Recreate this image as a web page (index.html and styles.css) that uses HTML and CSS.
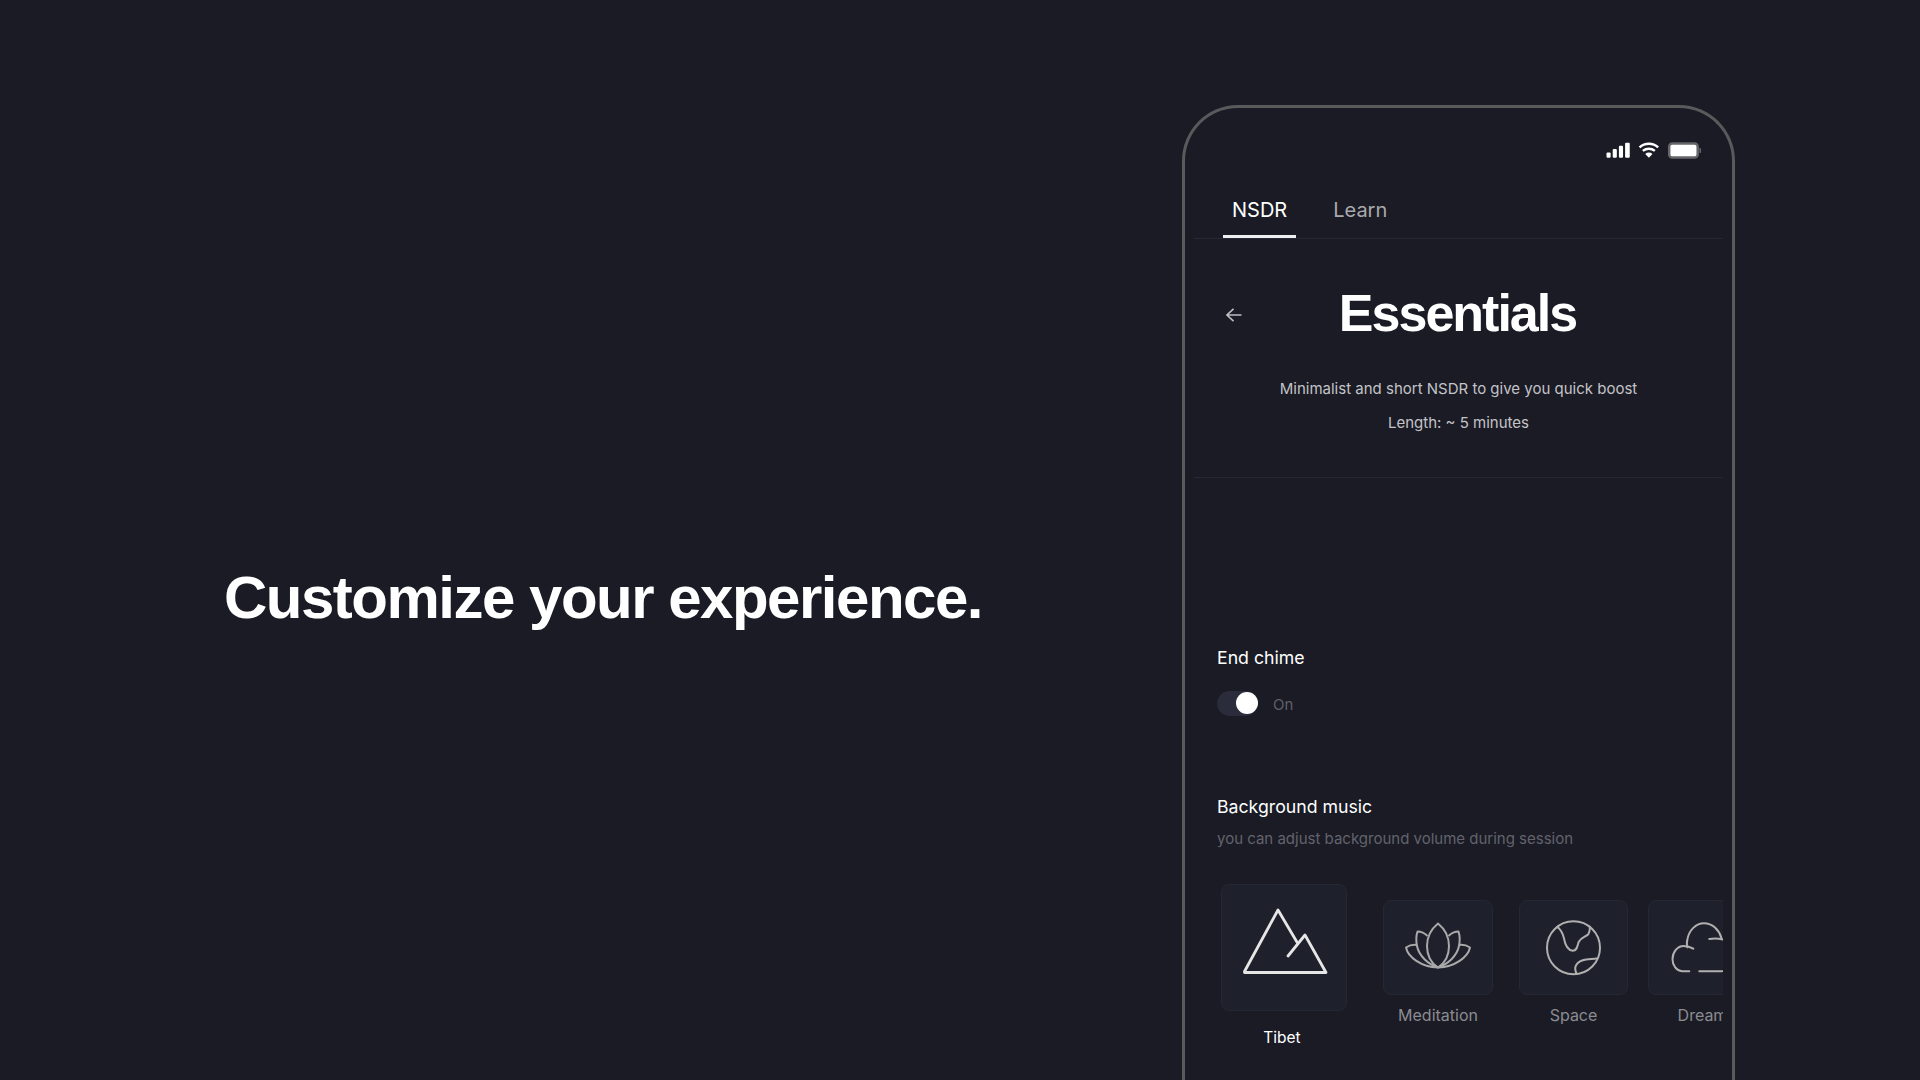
FILE: index.html
```html
<!DOCTYPE html>
<html lang="en">
<head>
  <meta charset="UTF-8" />
  <meta name="viewport" content="width=device-width, initial-scale=1.0" />
  <title>Customize your experience</title>
  <link rel="stylesheet" href="styles.css">
</head>

<body>

  <section class="hero">
    <h1>Customize your experience.</h1>
  </section>

  <div class="phone">
    <div class="status">
      <svg width="95" height="17" viewBox="0 0 92 16">
        <rect x="0.5" y="10" width="4" height="5" rx="1" fill="#fff"/>
        <rect x="6.5" y="6.5" width="4" height="8.5" rx="1" fill="#fff"/>
        <rect x="12.5" y="3.5" width="4" height="11.5" rx="1" fill="#fff"/>
        <rect x="18.5" y="0.5" width="4.5" height="14.5" rx="1" fill="#fff"/>
        <path d="M32.5 5a13.5 13.5 0 0 1 18 0M35.7 8.4a9 9 0 0 1 11.600 0" fill="none" stroke="#fff" stroke-width="2.400"/>
        <path d="M38 11.400a5 5 0 0 1 7 0L41.500 15z" fill="#fff"/>
        <rect x="61.2" y="1.2" width="27.600" height="13.600" rx="3" fill="#fff" stroke="#66666a" stroke-width="2.400"/>
        <path d="M90.500 5.500a2.500 2.500 0 0 1 0 5z" fill="#66666a"/>
      </svg>
    </div>

    <nav class="tabs">
      <a class="tab active">NSDR</a>
      <a class="tab">Learn</a>
    </nav>

    <header class="head">
      <svg class="back" width="16" height="14" viewBox="0 0 16 14">
        <path d="M15.500 7H1M7.500 .8 1 7l6.500 6.200" fill="none" stroke="#bdbdc0" stroke-width="1.600"/>
      </svg>
      <h2>Essentials</h2>
    </header>

    <div class="intro">
      <p>Minimalist and short NSDR to give you quick boost</p>
      <p>Length: ~ 5 minutes</p>
    </div>

    <div class="settings">
      <h3>End chime</h3>
      <div class="toggle-row">
        <span class="toggle"><span class="knob"></span></span>
        <span class="toggle-label">On</span>
      </div>

      <h3 class="music-title">Background music</h3>
      <p class="hint">you can adjust background volume during session</p>
    </div>

    <div class="tracks">
      <div class="track selected">
        <div class="card">
          <svg viewBox="0 0 126 127">
            <path d="M23.500 87.500 57 26l19.500 33M67 72l17-21 21 37.500H23.500" fill="none" stroke="#e6e6e6" stroke-width="2.800" stroke-linejoin="round" stroke-linecap="round"/>
          </svg>
        </div>
        <span>Tibet</span>
      </div>
      <div class="track meditation">
        <div class="card">
          <svg viewBox="0 0 110 95">
            <g fill="none" stroke="#a9a9a9" stroke-width="2" stroke-linejoin="round">
              <path d="M55 23.500C47 30 44 38 44 46c0 9 4 17 11 21.500C62 63 66 55 66 46c0-8-3-16-11-22.500z"/>
              <path d="M44.500 36c-3-3-7-4.500-10-4.500-1.500 4.500-1.500 9.500-.5 14.500 2 10 11 18 21 21.500"/>
              <path d="M65.500 36c3-3 7-4.500 10-4.500 1.500 4.500 1.500 9.500.5 14.500-2 10-11 18-21 21.500"/>
              <path d="M34 45c-4-.5-8 .5-11 2.500 2 9.500 15 19.500 32 20"/>
              <path d="M76 45c4-.5 8 .5 11 2.500-2 9.500-15 19.500-32 20"/>
            </g>
          </svg>
        </div>
        <span>Meditation</span>
      </div>
      <div class="track space">
        <div class="card">
          <svg viewBox="0 0 109 95">
            <g fill="none" stroke="#b0b0b0" stroke-width="2" stroke-linecap="round">
              <circle cx="54.500" cy="47.700" r="26.500"/>
              <path d="M38.300 26.700c3.500 3 5.500 6.500 6.500 11 1 5.500 3.500 12.500 9 13 4.500 0 4.500-5 6-9 2-4 7-5 9.500-7.500 1.500-2 1.500-5 1.700-7.500"/>
              <path d="M57.700 74c-1.500-3-2-6.500-.5-9 2-3.500 6-5 10-5.500 3.500-.5 7.500-.5 10.500-1"/>
            </g>
          </svg>
        </div>
        <span>Space</span>
      </div>
      <div class="track dream">
        <div class="card">
          <svg viewBox="0 0 109 95">
            <g fill="none" stroke="#b0b0b0" stroke-width="2" stroke-linecap="round">
              <path d="M41.300 71.200H34c-5.500-.5-9.500-5.500-9.500-12 0-7 5-13.200 11-13.200 3.500 0 7 1 9.800 2.700"/>
              <path d="M39.500 47.300c-1-2-.7-5-.2-7.500C41 30 48 23.300 56 23.300c8.500 0 15 6.500 17.500 15"/>
              <path d="M61.300 39c8-1.500 20 0 24 9 5 11-3 23-13 23.300H51.300"/>
            </g>
          </svg>
        </div>
        <span>Dream</span>
      </div>
    </div>
  </div>

</body>
</html>
```

FILE: styles.css
```css
* {
  margin: 0;
  padding: 0;
  box-sizing: border-box;
}

html, body {
  height: 1080px;
  overflow: hidden;
}

body {
  display: flex;
  background-color: #1a1b25;
  color: #fff;
  font-family: 'Inter', sans-serif;
}

.hero {
  flex: 1;
  padding-left: 224px;
  height: 1080px;
  display: flex;
  align-items: center;
}

.hero h1 {
  font-family: 'Liberation Sans', sans-serif;
  font-size: 60px;
  font-weight: 700;
  letter-spacing: -1.5px;
  line-height: 70px;
  margin-top: 115px;
}

.phone {
  width: 553px;
  height: 1080px;
  margin: 105px 185px 0 0;
  padding: 0 9px;
  border: 3px solid #5a5a5c;
  border-bottom: none;
  border-radius: 56px 56px 0 0;
  flex-shrink: 0;
}

.status {
  display: flex;
  justify-content: flex-end;
  padding: 34px 22px 0 0;
  height: 50px;
}

.tabs {
  display: flex;
  gap: 28px;
  margin-top: 40px;
  padding-left: 29px;
  border-bottom: 1px solid #262735;
}

.tab {
  padding: 0 9px 13px;
  font-size: 20px;
  line-height: 24px;
  color: #a9a9ad;
  border-bottom: 3px solid transparent;
}

.tab.active {
  color: #fff;
  border-bottom-color: #efefef;
}

.head {
  display: grid;
  grid-template-columns: 1fr auto 1fr;
  align-items: center;
  margin-top: 44px;
  height: 60px;
}

.back {
  margin-left: 32px;
  margin-top: 4px;
}

.head h2 {
  font-family: 'Liberation Sans', sans-serif;
  font-size: 52px;
  font-weight: 700;
  letter-spacing: -2px;
  line-height: 60px;
  margin-right: 2px;
}

.intro {
  margin-top: 29px;
  padding-bottom: 37px;
  border-bottom: 1px solid #262735;
  text-align: center;
  font-size: 15px;
  line-height: 34px;
  color: #c4c4c8;
}

.settings {
  padding-left: 23px;
}

.settings h3 {
  font-size: 17.700px;
  font-weight: 400;
  line-height: 24px;
}

.settings > h3:first-child {
  margin-top: 168px;
}

.toggle-row {
  display: flex;
  align-items: center;
  gap: 15px;
  margin-top: 21px;
}

.toggle {
  display: flex;
  align-items: center;
  justify-content: flex-end;
  width: 41px;
  height: 25px;
  border-radius: 13px;
  background-color: #2a2b3b;
}

.knob {
  width: 22px;
  height: 22px;
  border-radius: 50%;
  background-color: #fff;
  margin-top: -1px;
}

.toggle-label {
  font-size: 15px;
  color: #5f6068;
  margin-top: 2px;
}

.music-title {
  margin-top: 79px;
}

.hint {
  margin-top: 9px;
  font-size: 15px;
  line-height: 22px;
  color: #62636c;
}

.tracks {
  display: flex;
  align-items: flex-start;
  margin-top: 34px;
  padding-left: 27px;
  overflow: hidden;
  height: 200px;
}

.track {
  display: flex;
  flex-direction: column;
  align-items: center;
  flex-shrink: 0;
  margin-top: 16px;
  font-size: 16px;
  line-height: 20px;
  color: #8b8b90;
}

.track span {
  margin-top: 10px;
}

.card {
  width: 110px;
  height: 95px;
  border: 1px solid #262734;
  border-radius: 8px;
  background-color: #1e202c;
}

.card svg {
  display: block;
  margin: -1px;
}

.meditation {
  margin-left: 36px;
}

.space {
  margin-left: 26px;
}

.dream {
  margin-left: 20px;
}

.space .card,
.dream .card {
  width: 109px;
}

.selected {
  margin-top: 0;
  font-size: 15.500px;
  color: #fff;
}

.selected .card {
  width: 126px;
  height: 127px;
}

.selected span {
  margin: 17px 4px 0 0;
}
```
